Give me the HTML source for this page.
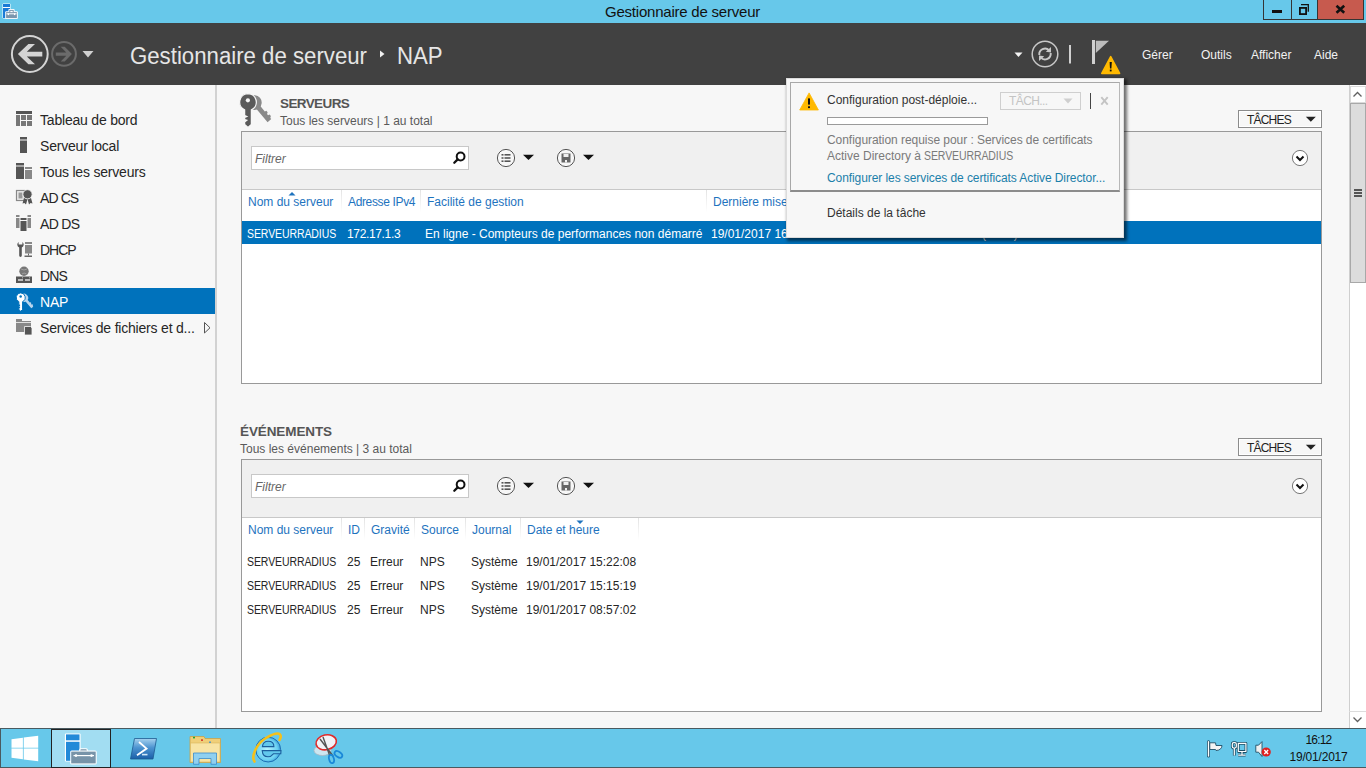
<!DOCTYPE html>
<html><head><meta charset="utf-8">
<style>
*{margin:0;padding:0;box-sizing:border-box}
html,body{width:1366px;height:768px;overflow:hidden;background:#f7f7f7;font-family:"Liberation Sans",sans-serif}
.a{position:absolute}
svg{position:absolute;overflow:visible}
.t{position:absolute;white-space:nowrap;line-height:1}
#title{left:0;top:0;width:1366px;height:23px;background:#67c8ea}
#hdr{left:0;top:23px;width:1366px;height:62px;background:#414141}
#nav{left:0;top:85px;width:217px;height:643px;background:#f7f7f7;border-right:2px solid #d2d2d2}
.navt{font-size:14px;color:#262626;left:40px;letter-spacing:-0.2px}
.sel{left:0;width:215px;height:26px;background:#0072bc}
.sh{font-size:13.5px;font-weight:bold;color:#555}
.ss{font-size:12px;color:#5a5a5a}
.panel{left:241px;width:1081px;height:253px;border:1px solid #999;background:#fff}
.tb{left:0;top:0;width:1079px;height:58px;background:#f0f0f0;border-bottom:1px solid #c8c8c8}
.filt{left:9px;top:14px;width:218px;height:24px;background:#fff;border:1px solid #c8c8c8}
.ft{font-size:12px;font-style:italic;color:#666}
.ch{font-size:12px;color:#1e73be}
.cs{width:1px;height:22px;background:linear-gradient(#e3e3e3,#fff)}
.cell{font-size:12px;color:#262626}
.taches{left:1238px;width:84px;height:18px;border:1px solid #8c8c8c;background:#f7f7f7;box-shadow:inset 0 0 0 1px #fff}
.menu{font-size:12px;color:#f2f2f2}
#task{left:0;top:728px;width:1366px;height:40px;background:#67c8ea;border-top:1px solid #4a5a60}
</style></head><body>

<!-- Title bar -->
<div id="title" class="a">
  <svg width="20" height="20" style="left:0;top:0">
    <rect x="2.5" y="3.5" width="8" height="15" rx="1" fill="#fff"/>
    <rect x="3" y="4" width="7" height="3" fill="#1a7ad6"/>
    <rect x="3" y="8" width="7" height="10" fill="#1a7ad6"/>
    <rect x="5.2" y="11.2" width="12.6" height="7.8" rx="1" fill="#fff"/>
    <rect x="8.4" y="9" width="6.2" height="3.6" rx="1" fill="#fff"/>
    <rect x="6.1" y="12.1" width="10.8" height="6" fill="#7a96ad"/>
    <rect x="9.3" y="9.9" width="4.4" height="2.4" fill="#7a96ad"/>
    <rect x="10.3" y="10.9" width="2.4" height="1.2" fill="#fff"/>
    <rect x="6.5" y="13.3" width="10" height="1" fill="#fff"/>
    <rect x="7.8" y="13.3" width="1.2" height="1.8" fill="#fff"/><rect x="14" y="13.3" width="1.2" height="1.8" fill="#fff"/>
  </svg>
  <div class="t" style="left:605px;top:4px;font-size:15px;color:#111;letter-spacing:-0.22px">Gestionnaire de serveur</div>
  <div class="a" style="left:1263px;top:0;width:101px;height:20px;border:1px solid #353535;border-top:none;background:#67c8ea"></div>
  <div class="a" style="left:1291px;top:0;width:1px;height:19px;background:#353535"></div>
  <div class="a" style="left:1317px;top:0;width:46px;height:19px;background:#c75a4e;border-left:1px solid #353535"></div>
  <div class="a" style="left:1272px;top:10px;width:10px;height:3px;background:#111"></div>
  <svg width="20" height="20" style="left:1296px;top:2px">
    <path d="M5 2.6 L12.3 2.6 L12.3 9.8" fill="none" stroke="#111" stroke-width="1.3"/>
    <rect x="3.9" y="5.9" width="6.2" height="6.2" fill="#67c8ea" stroke="#111" stroke-width="1.8"/>
  </svg>
  <svg width="14" height="12" style="left:1334px;top:4px"><path d="M2.5 1.8 L10.2 8.7 M10.2 1.8 L2.5 8.7" stroke="#111" stroke-width="2.6"/></svg>
</div>

<!-- Header -->
<div id="hdr" class="a">
  <svg width="120" height="62" style="left:0;top:0">
    <circle cx="29.8" cy="31" r="17.9" fill="none" stroke="#d4d4d4" stroke-width="2"/>
    <path d="M17.9 31.1 L28.4 20.9 L35 20.9 L26.8 28.8 L42.3 28.8 L42.3 33.4 L26.8 33.4 L35 41.2 L28.4 41.2 Z" fill="#d4d4d4"/>
    <circle cx="64" cy="30.9" r="11.9" fill="none" stroke="#6b6b6b" stroke-width="2"/>
    <path d="M71.9 31.1 L64.7 38.4 L60.7 38.4 L66.3 32.7 L55.8 32.7 L55.8 29.6 L66.3 29.6 L60.7 23.8 L64.7 23.8 Z" fill="#6b6b6b"/>
    <path d="M82.5 28 L93.5 28 L88 34.5 Z" fill="#d0d0d0"/>
  </svg>
  <svg width="10" height="10" style="left:379px;top:26px"><path d="M1 1.5 L5.5 5 L1 8.5 Z" fill="#f0f0f0"/></svg>
  <div class="t" style="left:130px;top:22px;font-size:23.5px;color:#e6e6e6;transform-origin:0 0;transform:scaleX(0.945)">Gestionnaire de serveur</div>
  <div class="t" style="left:397px;top:22px;font-size:23.5px;color:#e6e6e6;transform-origin:0 0;transform:scaleX(0.945)">NAP</div>

  <svg width="130" height="62" style="left:1000px;top:0">
    <path d="M14.5 29.5 L22.5 29.5 L18.5 34 Z" fill="#f4f4f4"/>
    <circle cx="45" cy="31" r="12.8" fill="none" stroke="#c8c8c8" stroke-width="1.5"/>
    <path d="M39.3 32 A5.8 5.8 0 0 1 49.2 27.3" fill="none" stroke="#c8c8c8" stroke-width="1.9"/>
    <path d="M51 24 L51 29.5 L45.8 28.8 Z" fill="#c8c8c8"/>
    <path d="M50.7 30 A5.8 5.8 0 0 1 40.8 34.7" fill="none" stroke="#c8c8c8" stroke-width="1.9"/>
    <path d="M39 38 L39 32.5 L44.2 33.2 Z" fill="#c8c8c8"/>
    <rect x="69" y="22" width="2" height="18.5" fill="#d0d0d0"/>
    <rect x="92" y="17" width="3" height="24" fill="#d0d0d0"/>
    <path d="M95.8 17.8 L109 17.8 L95.8 30 Z" fill="#bdbdbd"/>
    <path d="M110.7 33.6 L119.6 50.4 L101.8 50.4 Z" fill="#ffb900" stroke="#ffb900" stroke-width="1.6" stroke-linejoin="round"/>
    <path d="M109.6 39 L111.8 39 L111.4 45.6 L110 45.6 Z" fill="#111"/>
    <rect x="109.8" y="46.6" width="1.8" height="1.8" fill="#111"/>
  </svg>
  <div class="t menu" style="left:1142px;top:26px">Gérer</div>
  <div class="t menu" style="left:1201px;top:26px">Outils</div>
  <div class="t menu" style="left:1251px;top:26px">Afficher</div>
  <div class="t menu" style="left:1314px;top:26px">Aide</div>
</div>

<!-- Nav -->
<div id="nav" class="a">
  <div class="a sel" style="top:203px"></div>

  <svg width="216" height="260" style="left:0;top:0">
    <g transform="translate(0,-85)">
    <!-- Tableau de bord -->
    <rect x="16" y="111" width="16" height="3" fill="#555"/>
    <rect x="16" y="115" width="4" height="11" fill="#777"/>
    <rect x="21" y="115" width="5" height="5" fill="#777"/>
    <rect x="27" y="115" width="5" height="5" fill="#777"/>
    <rect x="21" y="121" width="5" height="5" fill="#777"/>
    <rect x="27" y="121" width="5" height="5" fill="#777"/>
    <!-- Serveur local -->
    <rect x="20" y="137" width="7" height="2.5" fill="#555"/>
    <rect x="20" y="140.5" width="7" height="12.5" fill="#555"/>
    <!-- Tous les serveurs -->
    <rect x="16" y="163" width="8" height="2.5" fill="#555"/>
    <rect x="16" y="166.5" width="8" height="12.5" fill="#555"/>
    <rect x="25" y="167" width="7" height="2" fill="#888"/>
    <rect x="25" y="170" width="7" height="9" fill="#888"/>
    <!-- AD CS -->
    <rect x="16.5" y="190.5" width="8" height="10" fill="#eee" stroke="#888" stroke-width="1.2"/>
    <rect x="18.5" y="192.5" width="4" height="6" fill="#999"/>
    <path d="M24 198 L22.5 203.5 L24.5 203 L26 204.5 L27.5 199 Z M31 198 L32.5 203.5 L30.5 203 L29 204.5 L27.5 199 Z" fill="#555"/>
    <circle cx="27.5" cy="194.3" r="4.6" fill="#555" stroke="#f7f7f7" stroke-width="0.8"/>
    <!-- AD DS -->
    <rect x="16" y="215" width="3.5" height="2" fill="#888"/><rect x="16" y="218" width="3.5" height="10" fill="#888"/>
    <rect x="27.5" y="215" width="3.5" height="2" fill="#888"/><rect x="27.5" y="218" width="3.5" height="10" fill="#888"/>
    <rect x="20.5" y="218" width="6" height="2" fill="#555"/><rect x="20.5" y="221" width="6" height="10" fill="#555"/>
    <!-- DHCP -->
    <path d="M18.6 242 A3.3 3.3 0 0 0 19.2 247.6 L19.2 255.6 A1.3 1.3 0 0 0 21.8 255.6 L21.8 247.6 A3.3 3.3 0 0 0 22.4 242 L22.4 244.6 L18.6 244.6 Z" fill="#555"/>
    <rect x="25" y="242" width="7" height="2" fill="#888"/>
    <rect x="25" y="245" width="7" height="8.5" fill="#888"/>
    <rect x="28" y="253.5" width="1" height="2" fill="#666"/>
    <rect x="24.5" y="255.5" width="7.5" height="1.5" fill="#666"/>
    <!-- DNS -->
    <circle cx="24" cy="271.3" r="4.7" fill="#777"/>
    <path d="M21 269 Q24 271 27 269 M22 274 Q24 272 26.5 274" stroke="#aaa" stroke-width="0.8" fill="none"/>
    <rect x="16" y="276.5" width="16" height="6.5" fill="#555"/>
    <rect x="18" y="279" width="5" height="2" fill="#bbb"/>
    <rect x="25" y="279" width="5" height="2" fill="#bbb"/>
    <rect x="22" y="277.3" width="1" height="1" fill="#bbb"/><rect x="29" y="277.3" width="1" height="1" fill="#bbb"/>
    <!-- NAP (white keys) -->
    <g transform="translate(20.6,297.6) scale(0.54) translate(-247.8,-102.3)">
      <g fill="#b9d6ee" transform="translate(254.3,102.6) rotate(-40)">
        <circle cx="0" cy="0" r="7.4"/>
        <path d="M-2.4 4 L-2.4 23.5 L2.4 23.5 L2.4 22 L4 21 L4 19 L2.4 18.5 L2.4 17 L4 16 L4 14 L2.4 13.5 L2.4 4 Z"/>
      </g>
      <path d="M247.8 93.6 A8.5 8.5 0 0 1 251.4 109.8 L251.4 124.5 L248 127.6 L244.6 124.5 L244.6 122 L246.8 120.3 L244.6 119.5 L244.6 117.5 L246.8 116.5 L244.6 115.5 L244.6 109.8 A8.5 8.5 0 0 1 247.8 93.6 Z" fill="#fff" stroke="#0072bc" stroke-width="1.8"/>
      <circle cx="247.9" cy="100.3" r="2.3" fill="#0072bc"/>
    </g>
    <!-- Services de fichiers -->
    <path d="M16 319 L22 319 L22 321 L31 321 L31 332 L16 332 Z" fill="#888"/>
    <rect x="16" y="322" width="15" height="0.8" fill="#f7f7f7"/>
    <path d="M24.5 326.5 L30.5 326.5 L32 328 L32 335 L24.5 335 Z" fill="#555" stroke="#f7f7f7" stroke-width="0.8"/>
    <path d="M204.5 322.5 L210 327.8 L204.5 333 Z" fill="none" stroke="#555" stroke-width="1"/>
    </g>
  </svg>
  <div class="t navt" style="top:28px">Tableau de bord</div>
  <div class="t navt" style="top:54px">Serveur local</div>
  <div class="t navt" style="top:80px">Tous les serveurs</div>
  <div class="t navt" style="top:106px;letter-spacing:-0.9px">AD CS</div>
  <div class="t navt" style="top:132px;letter-spacing:-0.7px">AD DS</div>
  <div class="t navt" style="top:158px;letter-spacing:-1.0px">DHCP</div>
  <div class="t navt" style="top:184px;letter-spacing:-0.9px">DNS</div>
  <div class="t navt" style="top:210px;color:#fff">NAP</div>
  <div class="t navt" style="top:236px">Services de fichiers et d...</div>
</div>

<!-- Servers section -->
<svg width="40" height="40" style="left:230px;top:88px">
  <g transform="translate(-230,-88)">
  <g fill="#8a8a8a" transform="translate(254.3,102.6) rotate(-40)">
    <circle cx="0" cy="0" r="7.4"/>
    <path d="M-2.4 4 L-2.4 23.5 L2.4 23.5 L2.4 22 L4 21 L4 19 L2.4 18.5 L2.4 17 L4 16 L4 14 L2.4 13.5 L2.4 4 Z"/>
  </g>
  <path d="M247.8 93.6 A8.5 8.5 0 0 1 251.4 109.8 L251.4 124.5 L248 127.6 L244.6 124.5 L244.6 122 L246.8 120.3 L244.6 119.5 L244.6 117.5 L246.8 116.5 L244.6 115.5 L244.6 109.8 A8.5 8.5 0 0 1 247.8 93.6 Z" fill="#5a5a5a" stroke="#f7f7f7" stroke-width="1.3"/>
  <circle cx="247.9" cy="100.3" r="2.1" fill="#f7f7f7"/>
  </g>
</svg>
<div class="t sh" style="left:280px;top:97px;letter-spacing:-0.6px">SERVEURS</div>
<div class="t ss" style="left:280px;top:115px">Tous les serveurs | 1 au total</div>
<div class="a taches" style="top:110px"><div class="t" style="left:8px;top:3px;font-size:12px;color:#222;letter-spacing:-0.8px">TÂCHES</div><svg width="12" height="8" style="left:66px;top:5px"><path d="M0.8 0.8 L10.8 0.8 L5.8 5.8 Z" fill="#222"/></svg></div>
<div class="a panel" style="top:131px">
  <div class="a tb"><div class="a filt"><div class="t ft" style="left:3px;top:6px">Filtrer</div></div><svg width="1079" height="58" style="left:0;top:0">
    <g fill="none" stroke="#111" stroke-width="2">
      <circle cx="218.6" cy="24.5" r="3.9"/>
      <path d="M215.7 27.4 L212.3 30.8" stroke-linecap="round" stroke-width="2.3"/>
    </g>
    <circle cx="264" cy="26" r="8.6" fill="#f7f7f7" stroke="#555" stroke-width="1"/>
    <g fill="#555"><rect x="259.5" y="22" width="2" height="1.6"/><rect x="262.5" y="22" width="6" height="1.6"/><rect x="259.5" y="25.2" width="2" height="1.6"/><rect x="262.5" y="25.2" width="6" height="1.6"/><rect x="259.5" y="28.4" width="2" height="1.6"/><rect x="262.5" y="28.4" width="6" height="1.6"/></g>
    <path d="M281 22.7 L292 22.7 L286.5 28 Z" fill="#111"/>
    <circle cx="324" cy="26" r="8.6" fill="#f7f7f7" stroke="#555" stroke-width="1"/>
    <path d="M319.5 21.5 L328.5 21.5 L328.5 30.5 L319.5 30.5 Z" fill="#666"/>
    <rect x="321.5" y="22" width="5" height="3" fill="#f0f0f0"/>
    <rect x="323" y="28" width="2" height="2.5" fill="#f0f0f0"/>
    <path d="M341 22.7 L352 22.7 L346.5 28 Z" fill="#111"/>
    <circle cx="1058" cy="26" r="7.6" fill="#fff" stroke="#777" stroke-width="1"/>
    <path d="M1054.5 24.5 L1058 28 L1061.5 24.5" fill="none" stroke="#111" stroke-width="2"/>
  </svg></div>
  <div class="a cs" style="left:99px;top:58px"></div><div class="a cs" style="left:178px;top:58px"></div><div class="a cs" style="left:464px;top:58px"></div>
  <svg width="10" height="6" style="left:45px;top:60px"><path d="M1.5 3.5 L8.5 3.5 L5 0 Z" fill="#1e73be"/></svg>
  <div class="t ch" style="left:6px;top:64px">Nom du serveur</div>
  <div class="t ch" style="left:106px;top:64px;letter-spacing:-0.35px">Adresse IPv4</div>
  <div class="t ch" style="left:185px;top:64px">Facilité de gestion</div>
  <div class="t ch" style="left:471px;top:64px">Dernière mise</div>
  <div class="a" style="left:0;top:89px;width:1079px;height:23px;background:#0072bc"></div>
  <div class="t cell" style="left:5px;top:96px;color:#fff;letter-spacing:-0.1px;transform-origin:0 0;transform:scaleX(0.875)">SERVEURRADIUS</div>
  <div class="t cell" style="left:105px;top:96px;color:#fff;letter-spacing:-0.35px">172.17.1.3</div>
  <div class="t cell" style="left:183px;top:96px;color:#fff">En ligne - Compteurs de performances non démarré</div>
  <div class="t cell" style="left:469px;top:96px;color:#fff">19/01/2017 16:12:00</div>
  <div class="t cell" style="left:740px;top:96px;color:#fff;letter-spacing:-0.7px">(Activé)</div>
</div>

<!-- Events section -->
<div class="t sh" style="left:240px;top:425px;letter-spacing:-0.1px">ÉVÉNEMENTS</div>
<div class="t ss" style="left:240px;top:443px">Tous les événements | 3 au total</div>
<div class="a taches" style="top:438px"><div class="t" style="left:8px;top:3px;font-size:12px;color:#222;letter-spacing:-0.8px">TÂCHES</div><svg width="12" height="8" style="left:66px;top:5px"><path d="M0.8 0.8 L10.8 0.8 L5.8 5.8 Z" fill="#222"/></svg></div>
<div class="a panel" style="top:459px">
  <div class="a tb"><div class="a filt"><div class="t ft" style="left:3px;top:6px">Filtrer</div></div><svg width="1079" height="58" style="left:0;top:0">
    <g fill="none" stroke="#111" stroke-width="2">
      <circle cx="218.6" cy="24.5" r="3.9"/>
      <path d="M215.7 27.4 L212.3 30.8" stroke-linecap="round" stroke-width="2.3"/>
    </g>
    <circle cx="264" cy="26" r="8.6" fill="#f7f7f7" stroke="#555" stroke-width="1"/>
    <g fill="#555"><rect x="259.5" y="22" width="2" height="1.6"/><rect x="262.5" y="22" width="6" height="1.6"/><rect x="259.5" y="25.2" width="2" height="1.6"/><rect x="262.5" y="25.2" width="6" height="1.6"/><rect x="259.5" y="28.4" width="2" height="1.6"/><rect x="262.5" y="28.4" width="6" height="1.6"/></g>
    <path d="M281 22.7 L292 22.7 L286.5 28 Z" fill="#111"/>
    <circle cx="324" cy="26" r="8.6" fill="#f7f7f7" stroke="#555" stroke-width="1"/>
    <path d="M319.5 21.5 L328.5 21.5 L328.5 30.5 L319.5 30.5 Z" fill="#666"/>
    <rect x="321.5" y="22" width="5" height="3" fill="#f0f0f0"/>
    <rect x="323" y="28" width="2" height="2.5" fill="#f0f0f0"/>
    <path d="M341 22.7 L352 22.7 L346.5 28 Z" fill="#111"/>
    <circle cx="1058" cy="26" r="7.6" fill="#fff" stroke="#777" stroke-width="1"/>
    <path d="M1054.5 24.5 L1058 28 L1061.5 24.5" fill="none" stroke="#111" stroke-width="2"/>
  </svg></div>
  <div class="a cs" style="left:99px;top:58px"></div><div class="a cs" style="left:122px;top:58px"></div><div class="a cs" style="left:172px;top:58px"></div><div class="a cs" style="left:223px;top:58px"></div><div class="a cs" style="left:278px;top:58px"></div><div class="a cs" style="left:396px;top:58px"></div>
  <svg width="10" height="6" style="left:333px;top:60px"><path d="M1.5 0.5 L8.5 0.5 L5 4 Z" fill="#1e73be"/></svg>
  <div class="t cell" style="left:5px;top:96px;letter-spacing:-0.1px;transform-origin:0 0;transform:scaleX(0.875)">SERVEURRADIUS</div><div class="t cell" style="left:105px;top:96px">25</div><div class="t cell" style="left:128px;top:96px">Erreur</div><div class="t cell" style="left:178px;top:96px">NPS</div><div class="t cell" style="left:229px;top:96px">Système</div><div class="t cell" style="left:284px;top:96px">19/01/2017 15:22:08</div>
  <div class="t cell" style="left:5px;top:120px;letter-spacing:-0.1px;transform-origin:0 0;transform:scaleX(0.875)">SERVEURRADIUS</div><div class="t cell" style="left:105px;top:120px">25</div><div class="t cell" style="left:128px;top:120px">Erreur</div><div class="t cell" style="left:178px;top:120px">NPS</div><div class="t cell" style="left:229px;top:120px">Système</div><div class="t cell" style="left:284px;top:120px">19/01/2017 15:15:19</div>
  <div class="t cell" style="left:5px;top:144px;letter-spacing:-0.1px;transform-origin:0 0;transform:scaleX(0.875)">SERVEURRADIUS</div><div class="t cell" style="left:105px;top:144px">25</div><div class="t cell" style="left:128px;top:144px">Erreur</div><div class="t cell" style="left:178px;top:144px">NPS</div><div class="t cell" style="left:229px;top:144px">Système</div><div class="t cell" style="left:284px;top:144px">19/01/2017 08:57:02</div>
  <div class="t ch" style="left:6px;top:64px">Nom du serveur</div>
  <div class="t ch" style="left:106px;top:64px">ID</div>
  <div class="t ch" style="left:129px;top:64px">Gravité</div>
  <div class="t ch" style="left:179px;top:64px">Source</div>
  <div class="t ch" style="left:230px;top:64px">Journal</div>
  <div class="t ch" style="left:285px;top:64px">Date et heure</div>
</div>

<!-- Popup -->
<div class="a" style="left:786px;top:78px;width:338px;height:160px;background:#f7f7f7;border:1px solid #dcdcdc;box-shadow:2px 2px 3px 1px rgba(0,0,0,.55)"></div>
<div class="a" style="left:790px;top:82px;width:331px;height:110px;border:1px solid #a8a8a8;border-bottom:2px solid #8c8c8c;border-right-color:#b8b8b8;width:330px"></div>
<svg width="30" height="30" style="left:795px;top:88px">
  <path d="M14.1 4.9 L23.4 22 L4.7 22 Z" fill="#ffb900" stroke="#ffb900" stroke-width="0.8" stroke-linejoin="round"/>
  <rect x="13" y="10.4" width="2" height="6.2" fill="#111"/>
  <rect x="13" y="18.3" width="2" height="1.8" fill="#111"/>
</svg>
<div class="t" style="left:827px;top:94px;font-size:12px;color:#333">Configuration post-déploie...</div>
<div class="a" style="left:827px;top:117px;width:161px;height:8px;background:#fff;border:1px solid #9a9a9a"></div>
<div class="t" style="left:827px;top:134px;font-size:12px;color:#7a7a7a;letter-spacing:-0.05px">Configuration requise pour : Services de certificats</div>
<div class="t" style="left:827px;top:150px;font-size:12px;color:#7a7a7a">Active Directory à <span style="display:inline-block;letter-spacing:-0.1px;transform-origin:0 0;transform:scaleX(0.875)">SERVEURRADIUS</span></div>
<div class="t" style="left:827px;top:172px;font-size:12px;color:#1b80aa;letter-spacing:-0.08px">Configurer les services de certificats Active Director...</div>
<div class="a" style="left:1000px;top:92px;width:81px;height:18px;border:1px solid #cfcfcf"></div>
<div class="t" style="left:1009px;top:95px;font-size:12px;color:#c4c4c4;letter-spacing:-0.6px">TÂCH...</div>
<svg width="12" height="8" style="left:1063px;top:98px"><path d="M0.5 0.5 L9.5 0.5 L5 5.5 Z" fill="#cfcfcf"/></svg>
<div class="a" style="left:1090px;top:93px;width:1px;height:16px;background:#444"></div>
<svg width="12" height="12" style="left:1100px;top:96px"><path d="M1.3 1.2 L7.7 8.6 M7.7 1.2 L1.3 8.6" stroke="#c4c4c4" stroke-width="1.9"/></svg>
<div class="t" style="left:827px;top:207px;font-size:12px;color:#333">Détails de la tâche</div>

<!-- Scrollbar -->
<div class="a" style="left:1349px;top:85px;width:17px;height:643px;background:#fff;border-left:1px solid #cfcfcf"></div>
<div class="a" style="left:1350px;top:86px;width:16px;height:17px;background:#fff;border:1px solid #dadada"></div>
<svg width="17" height="18" style="left:1349px;top:86px"><path d="M4.5 10.5 L8.5 6.5 L12.5 10.5" fill="none" stroke="#606060" stroke-width="1.3"/></svg>
<div class="a" style="left:1350px;top:103px;width:16px;height:180px;background:#dcdcdc;border:1px solid #a8a8a8"></div>
<div class="a" style="left:1354px;top:189px;width:8px;height:1.5px;background:#555"></div>
<div class="a" style="left:1354px;top:192px;width:8px;height:1.5px;background:#555"></div>
<div class="a" style="left:1354px;top:195px;width:8px;height:1.5px;background:#555"></div>
<div class="a" style="left:1349px;top:711px;width:17px;height:1px;background:#dcdcdc"></div>
<svg width="17" height="18" style="left:1349px;top:711px"><path d="M4.5 6.5 L8.5 10.5 L12.5 6.5" fill="none" stroke="#606060" stroke-width="1.3"/></svg>

<!-- Taskbar -->
<div id="task" class="a">
  <div class="a" style="left:0;top:0;width:1px;height:40px;background:#4a5a60"></div>
  <div class="a" style="left:0;top:38px;width:1366px;height:1px;background:#4a5a60"></div>
  <div class="a" style="left:51px;top:0;width:60px;height:39px;background:#a2ddf2;border:1px solid #222"></div>
  <svg width="360" height="40" style="left:0;top:-728px;overflow:visible">
  <g transform="translate(0,0)">
    <!-- windows logo -->
    <path d="M11.5 738.3 L22.9 736.7 L22.9 746.7 L11.5 746.7 Z M23.7 736.6 L38.2 734.8 L38.2 746.7 L23.7 746.7 Z M11.5 747.5 L22.9 747.5 L22.9 758.3 L11.5 756.8 Z M23.7 747.5 L38.2 747.5 L38.2 760.3 L23.7 758.4 Z" fill="#fff"/>
    <!-- server manager -->
    <rect x="64.9" y="732.4" width="15.7" height="28" rx="1" fill="#fff"/>
    <rect x="66" y="733.4" width="13.5" height="5.9" fill="#2289d8"/>
    <rect x="66" y="740.8" width="13.5" height="19" fill="#2289d8"/>
    <rect x="79.3" y="747.3" width="8.5" height="4" rx="1.5" fill="#fff"/>
    <rect x="80.3" y="748.2" width="6.5" height="2.5" rx="1" fill="#7793a8"/>
    <rect x="70.2" y="749.6" width="26.5" height="13.8" rx="1.5" fill="#fff"/>
    <rect x="71.2" y="750.6" width="24.5" height="11.8" fill="#7793a8"/>
    <path d="M73.5 754.6 L94 754.6" stroke="#fff" stroke-width="1.2"/>
    <circle cx="76" cy="754.6" r="1.3" fill="#fff"/><circle cx="91.5" cy="754.6" r="1.3" fill="#fff"/>
    <!-- powershell -->
    <defs>
      <linearGradient id="psg" x1="0" y1="0" x2="0" y2="1"><stop offset="0" stop-color="#a6d2ef"/><stop offset="0.45" stop-color="#4c93d0"/><stop offset="1" stop-color="#1a5fa8"/></linearGradient>
      <radialGradient id="ieg" cx="0.45" cy="0.5" r="0.6"><stop offset="0" stop-color="#b8f4ff"/><stop offset="0.7" stop-color="#6ad0f2"/><stop offset="1" stop-color="#2a8ad0"/></radialGradient>
    </defs>
    <path d="M134.5 737.5 L156.5 737.5 L153 758 L130.5 758 Z" fill="url(#psg)" stroke="#1d5a90" stroke-width="0.8" stroke-linejoin="round"/>
    <path d="M139 741 L146.6 747.6 L137 754.3" fill="none" stroke="#fff" stroke-width="1.8"/>
    <rect x="142" y="752.8" width="5.5" height="1.6" fill="#cfe6f7"/>
    <!-- explorer -->
    <path d="M190 737.5 L190 735.5 L204 735.5 L205 737.5 L220.5 737.5 L220.5 761.5 L190 761.5 Z" fill="#f0cf78" stroke="#c9a24a" stroke-width="0.8"/>
    <rect x="193" y="735.8" width="2" height="1.6" fill="#1ea83a"/>
    <rect x="201" y="738.3" width="2" height="1.6" fill="#d83a2a"/>
    <rect x="209" y="740.6" width="2" height="1.6" fill="#2a8ee0"/>
    <path d="M190.5 742 L220 742 L220 761 L190.5 761 Z" fill="#f8e4a4" stroke="#d9b65a" stroke-width="0.6"/>
    <path d="M193.5 752 L216.5 752 L216.5 763.3 L211 763.3 L211 757.5 L199 757.5 L199 763.3 L193.5 763.3 Z" fill="#8fd0f0" stroke="#3a8ccc" stroke-width="0.8"/>
    <!-- IE -->
    <circle cx="268.2" cy="748.6" r="12.4" fill="url(#ieg)" stroke="#1c6fb4" stroke-width="1"/>
    <path d="M262.4 745.6 Q263 740.2 268.2 740.2 Q273.9 740.2 273.9 745.6 Z" fill="#62c8ec" stroke="#1c5f9e" stroke-width="1.1"/>
    <path d="M262.2 749.6 L281 749.6 L280.8 752.8 L273.4 752.8 Q271 755.8 268 755.8 Q262.6 755.6 262.2 749.6 Z" fill="#62c8ec" stroke="#1c5f9e" stroke-width="1.1"/>
    <path d="M254.5 760.5 C251 756 256 743 266 737 C272 733.5 278 731.5 280 733.5 C281.2 735 280.8 737 279.5 739" fill="none" stroke="#f5c01a" stroke-width="2.6" stroke-linecap="round"/>
    <!-- snipping -->
    <ellipse cx="322.5" cy="749.5" rx="8.5" ry="5" fill="#cde6f0" stroke="#b0b8c0" stroke-width="0.8"/>
    <ellipse cx="326.2" cy="741.3" rx="10.3" ry="7.4" fill="#f2f2f6" stroke="#e02a2a" stroke-width="1.6" transform="rotate(-12 326.2 741.3)"/>
    <path d="M320 738 L333 755 M323 736 L329.5 754" stroke="#555" stroke-width="1.4"/>
    <ellipse cx="331.5" cy="758" rx="2.4" ry="4.2" fill="none" stroke="#1a88d8" stroke-width="1.8" transform="rotate(-15 331.5 758)"/>
    <ellipse cx="338.4" cy="753.4" rx="4.3" ry="2.6" fill="none" stroke="#1a88d8" stroke-width="1.8" transform="rotate(35 338.4 753.4)"/>
  </g>
  </svg>
  <svg width="80" height="30" style="left:1200px;top:6px">
    <g transform="translate(-1200,-734)">
    <path d="M1208.5 740.8 L1208.5 755" stroke="#1e4e66" stroke-width="3" stroke-linecap="round"/>
    <path d="M1208.5 740.8 L1208.5 755" stroke="#fff" stroke-width="1.4" stroke-linecap="round"/>
    <path d="M1209.8 741.8 L1215.5 741.8 L1216 744.5 L1222 744.5 C1222 747 1220 749.5 1216 749.5 L1215.5 748.5 L1209.8 748.5 Z" fill="#f4f4f4" stroke="#1e4e66" stroke-width="0.9"/>
    <g fill="none" stroke="#1e4e66" stroke-width="2.8" stroke-linejoin="round">
      <rect x="1232.3" y="741.6" width="4" height="5.4" rx="1.4"/>
      <path d="M1234.3 747 L1234.3 754.6"/>
      <rect x="1238.3" y="742.3" width="7.6" height="8.2"/>
      <path d="M1242 750.5 L1242 753.8 M1238.2 754.2 L1245.6 754.2"/>
    </g>
    <g fill="none" stroke="#fff" stroke-width="1.2" stroke-linejoin="round">
      <rect x="1232.3" y="741.6" width="4" height="5.4" rx="1.4"/>
      <path d="M1234.3 747 L1234.3 754.6"/>
      <rect x="1238.3" y="742.3" width="7.6" height="8.2"/>
      <path d="M1242 750.5 L1242 753.8 M1238.2 754.2 L1245.6 754.2"/>
    </g>
    <path d="M1255.8 744.2 L1258.5 744.2 L1262 740.6 L1262 755.5 L1258.5 751.2 L1255.8 751.2 Z" fill="#f0f0f0" stroke="#1e4e66" stroke-width="0.9"/>
    <circle cx="1266.2" cy="751" r="4.6" fill="#e02020"/>
    <path d="M1264.3 749.1 L1268.1 752.9 M1268.1 749.1 L1264.3 752.9" stroke="#fff" stroke-width="1.4"/>
    </g>
  </svg>
  <div class="t" style="left:1305.5px;top:5px;font-size:12px;color:#111;letter-spacing:-0.85px">16:12</div>
  <div class="t" style="left:1289.5px;top:22px;font-size:12px;color:#111;letter-spacing:-0.2px">19/01/2017</div>
</div>

</body></html>
